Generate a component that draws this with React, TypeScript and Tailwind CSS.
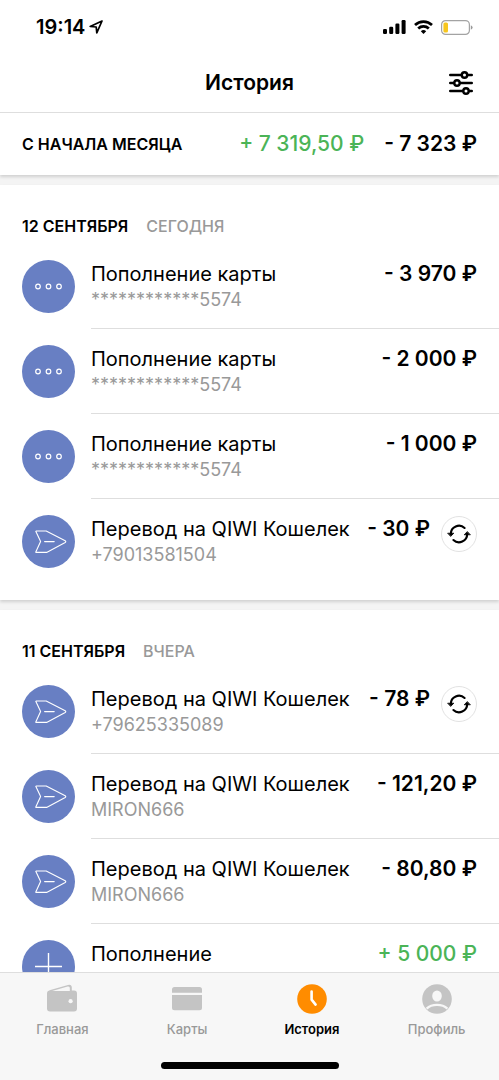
import type { ReactNode } from "react";

type IconName = "dots" | "send" | "plus";

type Operation = {
  icon: IconName;
  title: string;
  details: string;
  amount: string;
  income?: boolean;
  repeatable?: boolean;
};

type Day = {
  date: string;
  label: string;
  operations: Operation[];
};

const days: Day[] = [
  {
    date: "12 СЕНТЯБРЯ",
    label: "СЕГОДНЯ",
    operations: [
      { icon: "dots", title: "Пополнение карты", details: "************5574", amount: "- 3 970 ₽" },
      { icon: "dots", title: "Пополнение карты", details: "************5574", amount: "- 2 000 ₽" },
      { icon: "dots", title: "Пополнение карты", details: "************5574", amount: "- 1 000 ₽" },
      { icon: "send", title: "Перевод на QIWI Кошелек", details: "+79013581504", amount: "- 30 ₽", repeatable: true },
    ],
  },
  {
    date: "11 СЕНТЯБРЯ",
    label: "ВЧЕРА",
    operations: [
      { icon: "send", title: "Перевод на QIWI Кошелек", details: "+79625335089", amount: "- 78 ₽", repeatable: true },
      { icon: "send", title: "Перевод на QIWI Кошелек", details: "MIRON666", amount: "- 121,20 ₽" },
      { icon: "send", title: "Перевод на QIWI Кошелек", details: "MIRON666", amount: "- 80,80 ₽" },
      { icon: "plus", title: "Пополнение", details: "", amount: "+ 5 000 ₽", income: true },
    ],
  },
];

function OperationIcon({ name }: { name: IconName }) {
  return (
    <svg viewBox="0 0 53 53" className="size-[53px] shrink-0" fill="none" stroke="white" aria-hidden="true">
      <circle cx="26.5" cy="26.5" r="26.5" fill="#687fc3" stroke="none" />
      {name === "dots" && (
        <g strokeWidth="1.2">
          <circle cx="16" cy="26.5" r="2.3" />
          <circle cx="26.5" cy="26.5" r="2.3" />
          <circle cx="37" cy="26.5" r="2.3" />
        </g>
      )}
      {name === "send" && (
        <path
          d="M14.2 16H24.2L43.2 25.7Q44.4 26.6 43.2 27.5L24.6 37.4H14.2Q13.6 37.4 13.9 36.7L18.6 26.6L13.9 16.6Q13.6 16 14.2 16ZM22.6 26.6H32.2"
          strokeWidth="1.1"
          strokeLinejoin="round"
          strokeLinecap="round"
        />
      )}
      {name === "plus" && <path d="M26.5 13V40M13 26.5H40" strokeWidth="1.4" />}
    </svg>
  );
}

function RepeatIcon() {
  return (
    <svg viewBox="0 0 24 24" className="size-6" fill="none" stroke="black" strokeWidth="2.1" strokeLinecap="round" aria-hidden="true">
      <path d="M3.8 12A8.2 8.2 0 0 1 17.6 6" />
      <path d="M20.2 12A8.2 8.2 0 0 1 6.4 18" />
      <g fill="black" strokeWidth="0.8" strokeLinejoin="round">
        <path d="M1 11.2H6.8L3.9 14.2Z" />
        <path d="M23 12.8H17.2L20.1 9.8Z" />
      </g>
    </svg>
  );
}

function OperationRow({ operation, last }: { operation: Operation; last: boolean }) {
  return (
    <li className="flex h-[85px] gap-4 pl-[22px]">
      <div className="pt-4">
        <OperationIcon name={operation.icon} />
      </div>
      <div className={`flex min-w-0 flex-1 justify-between pt-[17px] pr-[22px] ${last ? "" : "border-b border-[#dedede]"}`}>
        <div className="whitespace-nowrap">
          <div className="text-[20px] leading-[26px]">{operation.title}</div>
          <div className="text-[18px] leading-[26px] text-[#999]">{operation.details}</div>
        </div>
        <div className="flex gap-[11px] whitespace-nowrap">
          <div className={`text-[21px] leading-[26px] ${operation.income ? "font-medium text-[#4bb457]" : "font-semibold"}`}>
            {operation.amount}
          </div>
          {operation.repeatable && (
            <button
              type="button"
              aria-label="Повторить"
              className="flex size-9 items-center justify-center rounded-full border border-[#e2e2e2]"
            >
              <RepeatIcon />
            </button>
          )}
        </div>
      </div>
    </li>
  );
}

function DaySection({ day }: { day: Day }) {
  return (
    <section className="bg-white pb-4 shadow-[0_2px_3px_rgba(0,0,0,0.15)]">
      <h2 className="flex h-[59px] items-center gap-[18px] px-[22px] pt-[22px] text-[16px] font-semibold">
        <span>{day.date}</span>
        <span className="font-medium text-[#999]">{day.label}</span>
      </h2>
      <ul>
        {day.operations.map((operation, i) => (
          <OperationRow key={i} operation={operation} last={i === day.operations.length - 1} />
        ))}
      </ul>
    </section>
  );
}

function StatusBar() {
  return (
    <div className="flex h-[54px] items-center justify-between pr-[26px] pl-9">
      <div className="flex items-center gap-1">
        <span className="text-[20px] font-semibold">19:14</span>
        <svg viewBox="0 0 14 14" className="size-3.5" fill="none" stroke="black" strokeWidth="1.7" strokeLinejoin="round" aria-hidden="true">
          <path d="M13 1L1.2 6.5L7.2 7L7.8 12.8Z" />
        </svg>
      </div>
      <div className="flex items-center gap-2">
        <svg viewBox="0 0 23 14" className="h-3.5 w-[23px]" aria-hidden="true">
          <rect x="0" y="9" width="4" height="5" rx="1.2" />
          <rect x="6.2" y="6.8" width="4" height="7.2" rx="1.2" />
          <rect x="12.4" y="3.6" width="4" height="10.4" rx="1.2" />
          <rect x="18.6" y="0" width="4" height="14" rx="1.2" />
        </svg>
        <svg viewBox="0 0 19 14" className="h-3.5 w-[19px]" fill="none" stroke="black" strokeWidth="2.7" aria-hidden="true">
          <path d="M1 5A12.3 12.3 0 0 1 18 5" />
          <path d="M4.2 8.5A7.7 7.7 0 0 1 14.8 8.5" />
          <path d="M9.5 14L6.8 11.2A3.9 3.9 0 0 1 12.2 11.2Z" fill="black" stroke="none" />
        </svg>
        <svg viewBox="0 0 32 15" className="h-[15px] w-8" aria-hidden="true">
          <rect x="0.6" y="0.6" width="27.8" height="13.8" rx="4" fill="none" stroke="#a3a3a3" strokeWidth="1.2" />
          <rect x="2.4" y="2.4" width="4.6" height="10.2" rx="1.6" fill="#f7c61f" />
          <path d="M29.8 5.2Q31.6 6 31.6 7.5T29.8 9.8Z" fill="#999" />
        </svg>
      </div>
    </div>
  );
}

function Tab({ label, active, children }: { label: string; active?: boolean; children: ReactNode }) {
  return (
    <button type="button" className="flex flex-1 flex-col items-center gap-[3px] pt-[11px]">
      <svg viewBox="0 0 30 30" className={`size-[30px] ${active ? "text-[#ff8c00]" : "text-[#c4c4c4]"}`} fill="currentColor" aria-hidden="true">
        {children}
      </svg>
      <span className={`text-[13px] leading-6 ${active ? "font-semibold" : "font-medium text-[#999]"}`}>{label}</span>
    </button>
  );
}

export default function App() {
  return (
    <div className="flex h-screen flex-col overflow-hidden bg-[#f4f4f4] font-['Inter','Liberation_Sans',sans-serif] text-black">
      <header className="bg-white">
        <StatusBar />
        <div className="grid h-[59px] grid-cols-[1fr_auto_1fr] items-center border-b border-[#dedede] px-[22px]">
          <h1 className="col-start-2 text-[21px] font-semibold">История</h1>
          <button type="button" aria-label="Фильтры" className="mr-1 justify-self-end">
            <svg viewBox="0 0 24 24" className="size-6" fill="white" stroke="black" strokeWidth="2.4" strokeLinecap="round" aria-hidden="true">
              <path d="M1.2 4H22.8M1.2 12H22.8M1.2 20H22.8" />
              <circle cx="15.5" cy="4" r="2.7" />
              <circle cx="8" cy="12" r="2.7" />
              <circle cx="17" cy="20" r="2.7" />
            </svg>
          </button>
        </div>
      </header>

      <main className="flex min-h-0 flex-1 flex-col gap-[10px] overflow-hidden">
        <div className="flex h-[62px] shrink-0 items-center justify-between bg-white px-[22px] whitespace-nowrap shadow-[0_2px_3px_rgba(0,0,0,0.15)]">
          <h2 className="text-[16px] font-semibold">С НАЧАЛА МЕСЯЦА</h2>
          <div className="flex gap-5 text-[21px]">
            <span className="font-medium text-[#4bb457]">+ 7 319,50 ₽</span>
            <span className="font-semibold">- 7 323 ₽</span>
          </div>
        </div>
        {days.map((day) => (
          <DaySection key={day.date} day={day} />
        ))}
      </main>

      <footer className="border-t border-[#dedede] bg-[#f7f7f7]">
        <nav className="flex h-[89px]">
          <Tab label="Главная">
            <rect x="0" y="6.5" width="30" height="21" rx="3" />
            <path d="M1 9Q1 6.6 3.4 5.9L21 0.9Q24.6 0 24.8 3.4V7H1Z" />
            <path d="M5.2 6.9L20.6 2.5Q22.8 2 22.8 4V6.9Z" fill="#f7f7f7" />
            <circle cx="23.6" cy="17.2" r="2.1" fill="#f7f7f7" />
          </Tab>
          <Tab label="Карты">
            <path d="M2.5 3H27.5Q30 3 30 5.5V8.7H0V5.5Q0 3 2.5 3ZM0 11.1H30V23.7Q30 26.2 27.5 26.2H2.5Q0 26.2 0 23.7Z" />
          </Tab>
          <Tab label="История" active>
            <circle cx="15" cy="15" r="14.8" />
            <path d="M14.6 7.6V15.6L18.6 20.6" fill="none" stroke="white" strokeWidth="2.6" strokeLinejoin="round" strokeLinecap="round" />
          </Tab>
          <Tab label="Профиль">
            <circle cx="15" cy="15" r="14.8" />
            <ellipse cx="15" cy="12" rx="4.8" ry="5.6" fill="#f7f7f7" />
            <path d="M4.6 24.6Q8.5 20.8 15 20.8T25.4 24.6" fill="none" stroke="#f7f7f7" strokeWidth="2.2" />
          </Tab>
        </nav>
        <div className="mx-auto mb-[11px] h-[7px] w-[178px] rounded-full bg-black" />
      </footer>
    </div>
  );
}
